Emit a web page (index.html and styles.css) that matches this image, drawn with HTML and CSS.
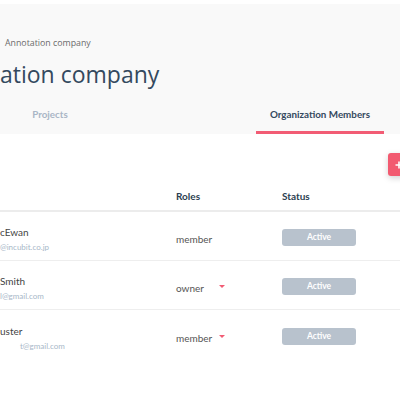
FILE: index.html
```html
<!DOCTYPE html>
<html>
<head>
<meta charset="utf-8">
<link rel="stylesheet" href="styles.css">
</head>
<body>
<div class="header">
  <div class="crumb">Annotation company</div>
  <h1 class="title">ation company</h1>
  <div class="tabs">
    <div class="tab tab-projects">Projects</div>
    <div class="tab tab-members active">Organization Members</div>
  </div>
</div>
<div class="content">
  <div class="toolbar">
    <button class="add-btn" aria-label="Add member"><svg class="plus" width="8" height="8" viewBox="0 0 8 8"><path d="M4 0.5V7.5M0.5 4H7.5" stroke="#ffffff" stroke-width="1.6" fill="none"/></svg></button>
  </div>
  <div class="table">
    <div class="row head">
      <div class="cell"></div>
      <div class="cell th">Roles</div>
      <div class="cell th">Status</div>
    </div>
    <div class="row">
      <div class="cell user">
        <div class="name">cEwan</div>
        <div class="email">@incubit.co.jp</div>
      </div>
      <div class="cell role"><span>member</span></div>
      <div class="cell"><span class="badge">Active</span></div>
    </div>
    <div class="row">
      <div class="cell user">
        <div class="name">Smith</div>
        <div class="email">l@gmail.com</div>
      </div>
      <div class="cell role"><span>owner</span><span class="caret"></span></div>
      <div class="cell"><span class="badge">Active</span></div>
    </div>
    <div class="row last">
      <div class="cell user">
        <div class="name">uster</div>
        <div class="email indent">t@gmail.com</div>
      </div>
      <div class="cell role"><span>member</span><span class="caret"></span></div>
      <div class="cell"><span class="badge">Active</span></div>
    </div>
  </div>
</div>
</body>
</html>
```

FILE: styles.css
```css
html, body {
  margin: 0;
  padding: 0;
  background: #ffffff;
  overflow: hidden;
  width: 400px;
  height: 400px;
}
body {
  font-family: "Lato", "Open Sans", sans-serif;
}
.header {
  margin-top: 4px;
  background: #f9f9f9;
  height: 130px;
  display: flex;
  flex-direction: column;
}
.crumb {
  font-family: "Open Sans", sans-serif;
  font-size: 8.8px;
  color: #6b6b6b;
  padding-left: 5px;
  margin-top: 33px;
  line-height: 12px;
}
.title {
  margin: 10px 0 0 0;
  font-family: "Open Sans", sans-serif;
  font-weight: 400;
  font-size: 23px;
  line-height: 30px;
  color: #34495e;
}
.tabs {
  margin-top: auto;
  display: grid;
  grid-template-columns: 0px 128px 128px 128px;
  height: 37px;
}
.tab {
  font-family: "Lato", sans-serif;
  font-weight: 700;
  font-size: 9.8px;
  text-align: center;
  line-height: 20px;
  padding-top: 7px;
  height: 37px;
  box-sizing: border-box;
  border-bottom: 3px solid transparent;
}
.tab-projects {
  grid-column: 2;
  margin-left: -14px;
  width: 128px;
  color: #a9b6c6;
}
.tab-members {
  grid-column: 4;
  color: #34495e;
  border-bottom-color: #f25c74;
}
.content {
  padding-top: 19px;
}
.toolbar {
  display: flex;
  justify-content: flex-end;
  height: 23px;
  margin-right: -28px;
}
.add-btn {
  width: 40px;
  height: 23px;
  border: none;
  border-radius: 3px;
  background: #f25a70;
  padding: 0 0 0 7px;
  display: flex;
  align-items: center;
  box-shadow: 0 2px 6px rgba(0,0,0,0.18);
}
.plus {
  display: block;
}
.table {
  margin-top: 5px;
}
.row {
  display: grid;
  grid-template-columns: 176px 106px 1fr;
  height: 49px;
  padding-top: 6px;
  border-bottom: 1px solid #eeeeee;
  box-sizing: border-box;
  align-items: center;
}
.row.head {
  height: 31px;
  padding-top: 0;
  border-bottom: 2px solid #ececec;
}
.row.last {
  border-bottom: none;
}
.th {
  font-weight: 700;
  font-size: 10px;
  color: #2c3e50;
}
.user {
  display: flex;
  flex-direction: column;
  gap: 4px;
}
.name {
  font-size: 10px;
  color: #444;
  line-height: 12px;
}
.email {
  font-size: 8px;
  color: #a7b7c8;
  line-height: 10px;
}
.email.indent {
  padding-left: 20px;
}
.role {
  font-size: 10px;
  color: #555;
  display: flex;
  align-items: center;
}
.role span:first-child {
  width: 43px;
}
.caret {
  width: 0;
  height: 0;
  border-left: 3px solid transparent;
  border-right: 3px solid transparent;
  border-top: 3px solid #f25c74;
  margin-top: -3px;
}
.badge {
  display: block;
  width: 74px;
  height: 17px;
  line-height: 17px;
  margin-top: -3px;
  border-radius: 3px;
  background: #b8c2cd;
  color: #fff;
  font-weight: 700;
  font-size: 8.5px;
  text-align: center;
}
```
